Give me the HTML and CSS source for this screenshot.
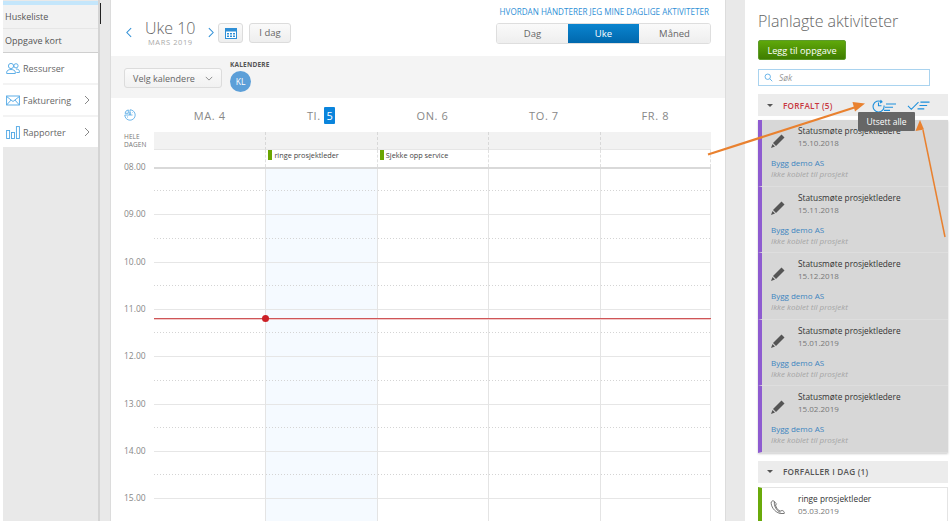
FILE: index.html
```html
<!DOCTYPE html>
<html lang="no">
<head>
<meta charset="utf-8">
<title>Kalender</title>
<link rel="stylesheet" href="styles.css">
</head>
<body>
<div class="app">
  <nav class="sidebar">
    <div class="sub-top"></div>
    <div class="sub-item">Huskeliste</div>
    <div class="sub-item">Oppgave kort</div>
    <div class="nav-item">
      <svg class="nav-icon" viewBox="0 0 14 12"><circle cx="5" cy="3.5" r="2.6"/><path d="M.7 11V9.6c0-1.5 2-2.6 4.3-2.6s4.300 1.100 4.300 2.600V11z"/><circle cx="10" cy="3.300" r="2.100"/><path d="M10 6.500c2 0 3.400.9 3.400 2.200V10h-3"/></svg>
      <span>Ressurser</span>
    </div>
    <div class="nav-item">
      <svg class="nav-icon" viewBox="0 0 14 12"><rect x=".6" y="1.500" width="12.800" height="9" /><path d="M.6 2l6.400 5 6.400-5M.6 10.500l4.500-5M13.400 10.500l-4.500-5"/></svg>
      <span>Fakturering</span>
      <svg class="nav-chevron" viewBox="0 0 6 10"><path d="M1 1l4 4-4 4"/></svg>
    </div>
    <div class="nav-item nav-item-last">
      <svg class="nav-icon" viewBox="0 0 14 13"><rect x=".6" y="4.500" width="3" height="8"/><rect x="5.500" y="6.500" width="3" height="6"/><rect x="10.400" y=".6" width="3" height="11.900"/></svg>
      <span>Rapporter</span>
      <svg class="nav-chevron" viewBox="0 0 6 10"><path d="M1 1l4 4-4 4"/></svg>
    </div>
  </nav>
  <div class="gutter-left"><div class="scroll-thumb"></div></div>

  <main class="main">
    <header class="toolbar">
      <div class="week-nav">
        <svg class="week-chevron" viewBox="0 0 7 12"><path d="M6 1L1 6l5 5"/></svg>
        <div class="week-title">
          <div class="week-name">Uke 10</div>
          <div class="week-month">MARS 2019</div>
        </div>
        <svg class="week-chevron" viewBox="0 0 7 12"><path d="M1 1l5 5-5 5"/></svg>
        <button class="btn btn-icon">
          <svg class="cal-icon" viewBox="0 0 12 12"><rect x=".5" y="1.500" width="11" height="10" fill="#fff" stroke="#2f8fd6"/><rect x=".5" y="1.500" width="11" height="3" fill="#2f8fd6"/><path d="M2 6h2v1.500H2zM5 6h2v1.500H5zM8 6h2v1.500H8zM2 8.500h2V10H2zM5 8.500h2V10H5zM8 8.500h2V10H8z" fill="#2f8fd6"/></svg>
        </button>
        <button class="btn btn-today">I dag</button>
      </div>
      <div class="view-side">
        <a class="help-link">HVORDAN HÅNDTERER JEG MINE DAGLIGE AKTIVITETER</a>
        <div class="segments">
          <div class="segment">Dag</div>
          <div class="segment segment-active">Uke</div>
          <div class="segment">Måned</div>
        </div>
      </div>
    </header>

    <section class="filter-band">
      <button class="btn btn-select">Velg kalendere
        <svg class="select-chevron" viewBox="0 0 10 6"><path d="M1 1l4 4 4-4"/></svg>
      </button>
      <div class="calendars">
        <div class="calendars-label">KALENDERE</div>
        <div class="avatar">KL</div>
      </div>
    </section>

    <section class="calendar">
      <div class="day-row">
        <div class="day-corner">
          <svg class="clock-icon" viewBox="0 0 12 12"><path d="M6 .8A5.200 5.200 0 1 1 .8 6H6z"/><path d="M4.300 .9A4 4 0 0 0 1 4.300h3.300z"/><path d="M6 3v3h2.500M3 8h1M8.500 3.500l-.6.600"/></svg>
        </div>
        <div class="day-name">MA. 4</div>
        <div class="day-name">TI. <span class="day-today">5</span></div>
        <div class="day-name">ON. 6</div>
        <div class="day-name">TO. 7</div>
        <div class="day-name">FR. 8</div>
      </div>

      <div class="allday">
        <div class="allday-label">HELE<br>DAGEN</div>
        <div class="allday-cell"></div><div class="allday-cell"></div><div class="allday-cell"></div><div class="allday-cell"></div><div class="allday-cell"></div>
      </div>
      <div class="events">
        <div class="events-spacer"></div>
        <div class="event-cell"></div>
        <div class="event-cell"><span class="event">ringe prosjektleder</span></div>
        <div class="event-cell"><span class="event">Sjekke opp service</span></div>
        <div class="event-cell"></div>
        <div class="event-cell"></div>
      </div>

      <div class="timegrid">
        <div class="times">
          <div class="time">08.00</div><div class="time">09.00</div><div class="time">10.00</div><div class="time">11.00</div><div class="time">12.00</div><div class="time">13.00</div><div class="time">14.00</div><div class="time">15.00</div>
        </div>
        <div class="col"></div>
        <div class="col col-today"></div>
        <div class="col"></div>
        <div class="col"></div>
        <div class="col col-last"></div>
        <div class="now-line"><span class="now-dot"></span></div>
      </div>
    </section>
  </main>

  <div class="gutter-right"></div>

  <aside class="panel">
    <h1 class="panel-title">Planlagte aktiviteter</h1>
    <button class="btn-add">Legg til oppgave</button>
    <div class="search">
      <svg class="search-icon" viewBox="0 0 12 12"><circle cx="5" cy="5" r="3.600"/><path d="M7.700 7.700L11 11"/></svg>
      <span>Søk</span>
    </div>

    <div class="group-head group-overdue">
      <span class="caret"></span>
      <span class="group-title">FORFALT (5)</span>
      <div class="group-actions">
        <svg class="action-snooze" viewBox="0 0 26 13"><path d="M9.500 2.800A5.500 5.500 0 1 0 12 6.500"/><path d="M6.500 3.500v3.300h3M8.500 1l1.500 1.800-2 1.200"/><path d="M14 5h10M13 8.200h8M12 11.400h6"/></svg>
        <svg class="action-check" viewBox="0 0 24 11"><path d="M1 6l3.500 3.500L12 2M14 2h9.500M13 5.500h8M11 9h7"/></svg>
      </div>
    </div>

    <div class="task-list task-list-overdue">
      <article class="task task-overdue">
        <svg class="task-icon" viewBox="0 0 16 16"><path d="M11.500 1.500l3 3L6 13l-3-3z"/><path d="M2.500 11l2.500 2.500L1 15z"/></svg>
        <div class="task-main"><div class="task-title">Statusmøte prosjektledere</div><div class="task-date">15.10.2018</div></div>
        <div class="task-company">Bygg demo AS</div><div class="task-project">Ikke koblet til prosjekt</div>
      </article>
      <article class="task task-overdue">
        <svg class="task-icon" viewBox="0 0 16 16"><path d="M11.500 1.500l3 3L6 13l-3-3z"/><path d="M2.500 11l2.500 2.500L1 15z"/></svg>
        <div class="task-main"><div class="task-title">Statusmøte prosjektledere</div><div class="task-date">15.11.2018</div></div>
        <div class="task-company">Bygg demo AS</div><div class="task-project">Ikke koblet til prosjekt</div>
      </article>
      <article class="task task-overdue">
        <svg class="task-icon" viewBox="0 0 16 16"><path d="M11.500 1.500l3 3L6 13l-3-3z"/><path d="M2.500 11l2.500 2.500L1 15z"/></svg>
        <div class="task-main"><div class="task-title">Statusmøte prosjektledere</div><div class="task-date">15.12.2018</div></div>
        <div class="task-company">Bygg demo AS</div><div class="task-project">Ikke koblet til prosjekt</div>
      </article>
      <article class="task task-overdue">
        <svg class="task-icon" viewBox="0 0 16 16"><path d="M11.500 1.500l3 3L6 13l-3-3z"/><path d="M2.500 11l2.500 2.500L1 15z"/></svg>
        <div class="task-main"><div class="task-title">Statusmøte prosjektledere</div><div class="task-date">15.01.2019</div></div>
        <div class="task-company">Bygg demo AS</div><div class="task-project">Ikke koblet til prosjekt</div>
      </article>
      <article class="task task-overdue">
        <svg class="task-icon" viewBox="0 0 16 16"><path d="M11.500 1.500l3 3L6 13l-3-3z"/><path d="M2.500 11l2.500 2.500L1 15z"/></svg>
        <div class="task-main"><div class="task-title">Statusmøte prosjektledere</div><div class="task-date">15.02.2019</div></div>
        <div class="task-company">Bygg demo AS</div><div class="task-project">Ikke koblet til prosjekt</div>
      </article>
    </div>

    <div class="group-head group-today">
      <span class="caret"></span>
      <span class="group-title">FORFALLER I DAG (1)</span>
    </div>

    <article class="task task-due">
      <svg class="task-icon phone-icon" viewBox="0 0 16 16"><path d="M3 1.500L1.200 3c-.5 4 3 10 9 11.500h4c.5-1.500-.5-2.500-2-3l-2 .6C8 11.500 6 8.500 5.500 6l1-1.200z"/><path d="M4.500 2.500c-1 4 2 9.500 6 10.800"/></svg>
      <div class="task-main"><div class="task-title">ringe prosjektleder</div><div class="task-date">05.03.2019</div></div>
    </article>
  </aside>
</div>

<div class="tooltip">Utsett alle</div>
<svg class="arrows" viewBox="0 0 952 530">
  <path class="arrow-line" d="M708 154.500L856 107"/>
  <path class="arrow-head" d="M865 103.500l-12.500-1.500 2.500 9.500z"/>
  <path class="arrow-line arrow-thin" d="M945 237L923 130"/>
  <path class="arrow-head" d="M920 120l-4.500 11 8.500-1.500z"/>
</svg>
</body>
</html>
```

FILE: styles.css
```css
* { box-sizing: border-box; }
html, body { margin: 0; height: 530px; overflow: hidden; background: #fff; }
body { font-family: "Open Sans", "Liberation Sans", sans-serif; color: #555; position: relative; }
button { font-family: inherit; }

.app { display: flex; height: 521px; padding-left: 3px; overflow: hidden; }

/* Left navigation */
.sidebar { width: 95px; background: #e9e9e9; flex: none; padding-top: 1px; }
.sub-top { height: 4px; background: #c4e6fb; }
.sub-item { height: 24px; background: #f2f2f2; border-bottom: 1px solid #e6e6e6; font-size: 9px; line-height: 23px; padding-left: 2px; color: #555; }
.sub-item:nth-child(3) { border-bottom: 1px solid #cfcfcf; }
.nav-item { height: 32px; background: #fff; display: flex; align-items: center; font-size: 9px; color: #666; padding: 0 8px 0 3px; border-bottom: 2px solid #f3f3f3; }
.nav-item-last { height: 30px; border-bottom: 0; }
.nav-icon { width: 14px; height: 13px; margin-right: 3px; fill: none; stroke: #4ea6e4; stroke-width: .9; flex: none; }
.nav-chevron { width: 6px; height: 10px; margin-left: auto; fill: none; stroke: #888; stroke-width: 1; }

.gutter-left { width: 13px; flex: none; background: #e9e9e9; border-left: 2px solid #d4d4d4; position: relative; border-right: 1px solid #dcdcdc; }
.scroll-thumb { position: absolute; left: 0; top: 3px; width: 1px; height: 21px; background: #222; }

/* Main */
.main { width: 614px; flex: none; background: #fff; display: flex; flex-direction: column; }
.toolbar { height: 56px; display: flex; justify-content: space-between; padding: 5px 14px 0 15px; }
.week-nav { display: flex; align-items: center; height: 48px; padding-top: 9px; margin-top: -1px; }
.week-chevron { width: 6px; height: 11px; fill: none; stroke: #2f8fd6; stroke-width: 1.200; flex: none; }
.week-title { width: 76px; padding-left: 13px; }
.week-name { font-size: 16px; font-weight: 300; line-height: 19px; color: #666; white-space: nowrap; }
.week-month { font-size: 7.500px; line-height: 9px; letter-spacing: .6px; color: #aaa; padding-left: 3px; white-space: nowrap; }
.btn { border: 1px solid #dcdcdc; border-radius: 3px; background: linear-gradient(#fafafa, #eee); color: #666; font-size: 9.500px; padding: 0; height: 20px; display: flex; align-items: center; justify-content: center; }
.btn-icon { width: 25px; margin-left: 4px; }
.cal-icon { width: 12px; height: 12px; }
.btn-today { width: 42px; margin-left: 6px; }
.view-side { width: 215px; display: flex; flex-direction: column; }
.help-link { font-size: 8.100px; line-height: 13px; color: #2f8fd6; text-align: right; white-space: nowrap; margin-right: 2px; }
.segments { display: flex; height: 21px; margin-top: 5px; border: 1px solid #dedede; border-radius: 3px; overflow: hidden; }
.segment { flex: 1; background: linear-gradient(#fafafa, #eee); font-size: 9.500px; line-height: 19px; text-align: center; color: #666; }
.segment-active { background: linear-gradient(#0a84cf, #0068ad); color: #fff; }

.filter-band { height: 42px; background: #f4f4f4; display: flex; padding: 4px 0 0 13px; }
.btn-select { width: 98px; height: 20px; margin-top: 8px; background: linear-gradient(#fbfbfb, #f1f1f1); font-size: 9px; }
.select-chevron { width: 8px; height: 5px; margin-left: 10px; fill: none; stroke: #777; stroke-width: 1; }
.calendars { margin-left: 8px; }
.calendars-label { font-size: 6.500px; font-weight: 700; line-height: 9px; color: #555; letter-spacing: .2px; }
.avatar { width: 21px; height: 21px; border-radius: 50%; background: #5c9fd8; color: #fff; font-size: 8.500px; line-height: 21px; text-align: center; margin-top: 2px; }

/* Calendar */
.calendar { flex: 1; padding-right: 14px; display: flex; flex-direction: column; overflow: hidden; }
.day-row, .allday, .events { display: grid; grid-template-columns: 43px repeat(5, 1fr); flex: none; }
.day-row { height: 34px; align-items: center; }
.day-corner { padding-left: 13px; display: flex; }
.clock-icon { width: 12px; height: 12px; fill: none; stroke: #4ea6e4; stroke-width: .8; }
.day-name { text-align: center; font-size: 11px; letter-spacing: .6px; color: #888; }
.day-today { display: inline-block; width: 11px; height: 17px; line-height: 17px; background: #0a84dc; color: #fff; border-radius: 1px; letter-spacing: 0; }
.allday { height: 18px; }
.allday-label { font-size: 6.500px; line-height: 7.500px; padding: 1px 0 0 13px; color: #777; letter-spacing: .1px; }
.allday-cell { background: #f2f2f2; border-left: 1px dashed #d8d8d8; border-bottom: 1px solid #e6e6e6; }
.allday-cell:nth-child(2) { border-left: 0; }
.events { height: 17px; }
.event-cell { border-left: 1px dashed #e0e0e0; padding-left: 2px; }
.event-cell:nth-child(2) { border-left: 0; }
.event-cell:last-child { border-right: 1px dashed #e0e0e0; }
.event { display: block; height: 10px; border-left: 4px solid #6aa500; padding-left: 2px; font-size: 7.300px; line-height: 10px; color: #444; white-space: nowrap; }

.timegrid { position: relative; flex: 1; display: grid; grid-template-columns: 43px repeat(5, 1fr); }
.time { height: 47.330px; font-size: 8.500px; line-height: 12px; color: #888; padding-left: 13px; transform: translateY(-6px); }
.col { border-left: 1px solid #e4e4e4; position: relative; }
.col:nth-child(2) { border-left: 0; }
.col-last { border-right: 1px solid #e4e4e4; }
.col-today { background: #f5faff; }
.col::before { content: ""; position: absolute; inset: 0; background: repeating-linear-gradient(#e6e6e6 0 1px, transparent 1px 47.330px); }
.col::after {
  content: "";
  position: absolute;
  inset: 0;
  background: repeating-linear-gradient(transparent 0 23.500px, #d4d4d4 23.500px 24.500px, transparent 24.500px 47.330px);
  mask-image: repeating-linear-gradient(90deg, #000 0 1px, transparent 1px 3px);
  -webkit-mask-image: repeating-linear-gradient(90deg, #000 0 1px, transparent 1px 3px);
}
.timegrid::before { content: ""; position: absolute; left: 43px; right: 0; top: 0; height: 2px; background: #d9d9d9; z-index: 1; }
.now-line { position: absolute; left: 43px; right: 0; top: 151px; height: 1px; background: #cf5557; z-index: 2; box-shadow: 0 1px 0 #f2c9c9; }
.now-dot { position: absolute; left: 108px; top: -3px; width: 7px; height: 7px; border-radius: 50%; background: #cc2027; }

.gutter-right { width: 20px; flex: none; background: #e9e9e9; border-left: 1px solid #dcdcdc; }

/* Right panel */
.panel { flex: 1; min-width: 0; padding: 0 4px 0 13px; background: #fff; overflow: hidden; }
.panel-title { font-size: 16px; font-weight: 300; line-height: 22px; margin: 10px 0 8px; color: #666; white-space: nowrap; }
.btn-add { display: block; width: 88px; height: 20px; border: 1px solid #5d9b2a; border-radius: 2px; background: linear-gradient(#5fa80a, #3f7d00); color: #fff; font-size: 9.200px; padding: 0; }
.search { width: 172px; height: 17px; margin-top: 9px; border: 1px solid #a9d3ef; background: #fff; display: flex; align-items: center; font-size: 8.500px; font-style: italic; color: #999; padding-left: 5px; }
.search-icon { width: 9px; height: 9px; margin-right: 6px; fill: none; stroke: #4ea6e4; stroke-width: 1.100; }
.group-head { height: 22px; background: #ececec; display: flex; align-items: center; padding-left: 9px; font-size: 8.200px; letter-spacing: .25px; }
.group-overdue { margin-top: 8px; }
.group-today { margin-top: 8px; }
.caret { width: 0; height: 0; border: 3px solid transparent; border-top: 3px solid #555; border-bottom: 0; margin-right: 10px; }
.group-overdue .group-title { color: #c8373f; font-weight: 600; }
.group-today .group-title { color: #555; font-weight: 600; }
.group-actions { margin-left: auto; padding-right: 18px; display: flex; align-items: center; gap: 9px; }
.action-snooze { width: 26px; height: 13px; fill: none; stroke: #1c8fdc; stroke-width: 1.100; }
.action-check { width: 23px; height: 11px; fill: none; stroke: #1c8fdc; stroke-width: 1.100; }

.task-list-overdue { margin-top: 4px; box-shadow: 0 1px 2px #ccc; }
.task { position: relative; height: 66.500px; padding: 4px 0 0 36px; border-left: 4px solid #8e5bd0; }
.task-overdue { background: #d7d7d7; border-bottom: 1px solid #dedede; }
.task-due { margin-top: 4px; height: 60px; background: #fff; border-left-color: #6aaa0a; border-top: 1px solid #e4e4e4; border-right: 1px solid #e4e4e4; }
.task-icon { position: absolute; left: 8px; top: 13px; width: 16px; height: 16px; fill: #555; }
.phone-icon { fill: none; stroke: #555; stroke-width: .8; top: 11px; }
.task-title { color: #333; font-size: 8.300px; line-height: 12px; margin-top: 1px; white-space: nowrap; }
.task-date { color: #777; line-height: 11px; font-size: 8px; }
.task-company { color: #3d85c0; line-height: 11px; margin: 9px 0 0 -27px; font-size: 8px; }
.task-project { color: #a5a5a5; font-style: italic; font-size: 8px; line-height: 12px; margin-left: -27px; white-space: nowrap; }

/* Overlays */
.tooltip { position: absolute; left: 858px; top: 112px; width: 57px; height: 19px; background: #666; color: #fff; font-size: 8.500px; line-height: 19px; text-align: center; border-radius: 1px; }
.arrows { position: absolute; left: 0; top: 0; width: 952px; height: 530px; pointer-events: none; }
.arrow-line { fill: none; stroke: #e9812f; stroke-width: 2.200; }
.arrow-thin { stroke-width: 1.500; }
.arrow-head { fill: #e9812f; }
```
